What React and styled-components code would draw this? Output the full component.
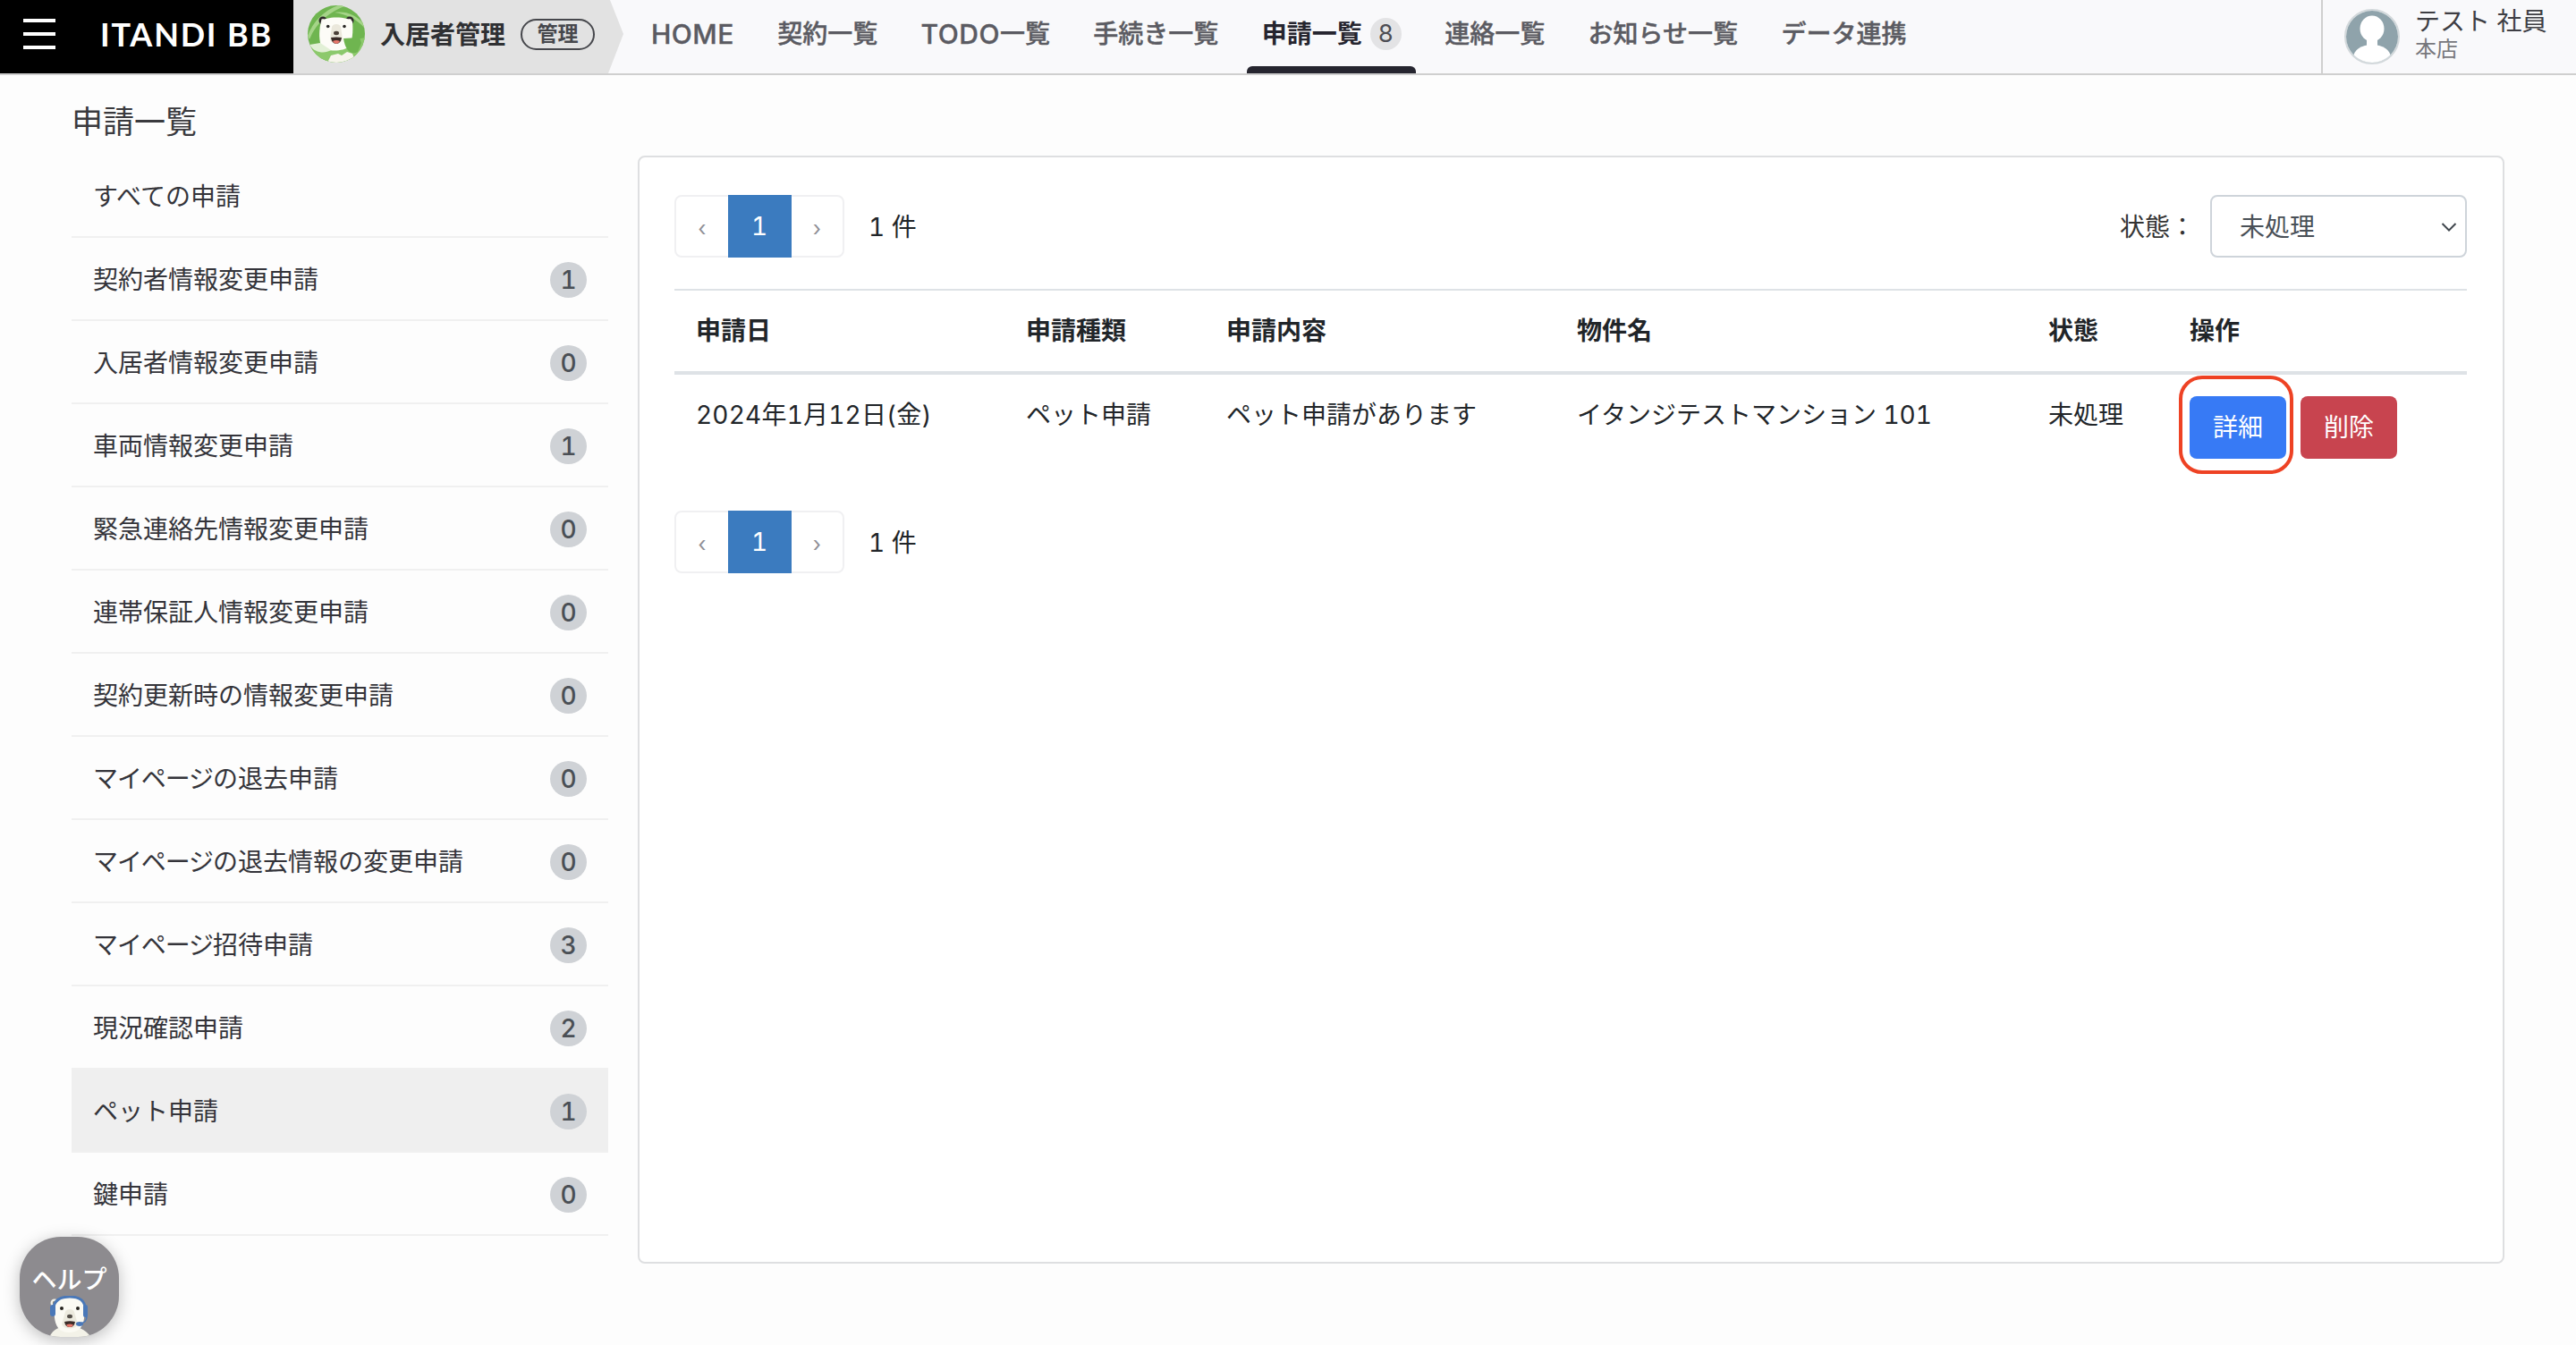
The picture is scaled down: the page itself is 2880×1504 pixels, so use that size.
import React from "react";
import styled, { createGlobalStyle } from "styled-components";

const GlobalStyle = createGlobalStyle`
  html, body {
    margin: 0;
    padding: 0;
    background: #fdfdfd;
  }
  body {
    font-family: Inter, "Noto Sans CJK JP", sans-serif;
    font-size: 28px;
    line-height: 42px;
    font-variant-numeric: tabular-nums;
    color: #212529;
  }
`;

const Page = styled.div`
  position: relative;
  width: 2880px;
  height: 1504px;
  overflow: hidden;
`;

const Header = styled.header`
  display: flex;
  height: 84px;
  box-sizing: border-box;
  background: #f9f9fb;
  border-bottom: 2px solid #cfcfcf;
`;

const Brand = styled.div`
  display: flex;
  align-items: center;
  width: 328px;
  flex: none;
  box-sizing: border-box;
  padding-bottom: 6px;
  background: #000;
`;

const Burger = styled.div`
  display: flex;
  flex-direction: column;
  gap: 11px;
  width: 36px;
  margin-left: 26px;
  span {
    display: block;
    height: 4px;
    background: #fff;
  }
`;

const BrandName = styled.div`
  margin-left: 50px;
  font-family: Lato, sans-serif;
  font-size: 36px;
  font-weight: 700;
  letter-spacing: 1.8px;
  color: #fff;
  white-space: nowrap;
`;

const ProductTab = styled.div`
  position: relative;
  display: flex;
  align-items: center;
  width: 370px;
  flex: none;
  box-sizing: border-box;
  padding: 0 0 6px 16px;
  background: #e2e2e2;
  clip-path: polygon(0 0, 354px 0, 369px 38px, 352px 82px, 0 82px);
`;

const ProductName = styled.div`
  margin: 2px 0 0 17px;
  font-size: 28px;
  font-weight: 700;
  color: #2f3033;
`;

const Pill = styled.div`
  margin-left: 17px;
  width: 83px;
  height: 35px;
  box-sizing: border-box;
  border: 2px solid #46474c;
  border-radius: 18px;
  font-size: 23px;
  font-weight: 700;
  line-height: 31px;
  text-align: center;
  color: #46474c;
`;

const Nav = styled.nav`
  display: flex;
  flex: 1;
  height: 82px;
  margin-left: 30px;
  gap: 48.4px;
`;

const NavItem = styled.div`
  position: relative;
  display: flex;
  align-items: center;
  height: 76px;
  font-size: 28px;
  font-weight: ${(p) => (p.$active ? 700 : 500)};
  color: ${(p) => (p.$active ? "#26252f" : "#5b5b62")};
  -webkit-text-stroke: ${(p) => (p.$active ? "0" : "0.4px")};
  white-space: nowrap;
  ${(p) =>
    p.$active &&
    `&::after {
      content: "";
      position: absolute;
      left: -17px;
      right: -16px;
      bottom: -6px;
      height: 8px;
      border-radius: 6px 6px 0 0;
      background: #26252f;
    }`}
`;

const NavLatin = styled.span`
  font-size: 30px;
  letter-spacing: 0.5px;
`;

const NavBadge = styled.span`
  width: 35px;
  height: 36px;
  margin-left: 9px;
  border-radius: 50%;
  background: #e3e3e5;
  font-size: 27px;
  font-weight: 400;
  line-height: 36px;
  text-align: center;
  color: #4d4d54;
`;

const UserBox = styled.div`
  display: flex;
  align-items: center;
  width: 285px;
  flex: none;
  box-sizing: border-box;
  padding-left: 24px;
  border-left: 2px solid #cfcfcf;
`;

const UserText = styled.div`
  margin-left: 17px;
`;

const UserName = styled.div`
  margin-top: -8px;
  font-size: 28px;
  line-height: 36px;
  color: #3e3e44;
  white-space: nowrap;
`;

const UserOffice = styled.div`
  font-size: 24px;
  line-height: 26px;
  color: #77777c;
`;

const Main = styled.main`
  display: flex;
  align-items: flex-start;
`;

const Side = styled.aside`
  width: 600px;
  margin-left: 80px;
  flex: none;
`;

const PageTitle = styled.h1`
  height: 89px;
  margin: 0;
  padding-top: 31px;
  box-sizing: border-box;
  font-size: 35px;
  font-weight: 400;
  line-height: 42px;
  color: #3a3a3e;
`;

const SideRow = styled.div`
  display: flex;
  align-items: center;
  justify-content: space-between;
  height: 93px;
  box-sizing: border-box;
  padding: 2px 24px 0;
  border-bottom: 2px solid #f0f0f0;
  background: ${(p) => (p.$active ? "#efefef" : "transparent")};
  color: #34343a;
`;

const TightKana = styled.span`
  letter-spacing: -1.1px;
`;

const CountBadge = styled.span`
  width: 41px;
  height: 40px;
  border-radius: 50%;
  background: #cfd2d6;
  font-size: 28px;
  font-weight: 500;
  line-height: 40px;
  text-align: center;
  color: #4a4f55;
`;

const Card = styled.section`
  width: 2087px;
  height: 1239px;
  margin: 90px 0 0 33px;
  box-sizing: border-box;
  padding: 42px 40px 0 39px;
  background: #fff;
  border: 2px solid #dedfe1;
  border-radius: 8px;
`;

const Toolbar = styled.div`
  display: flex;
  align-items: center;
  justify-content: space-between;
  margin-bottom: 35px;
`;

const PagerRow = styled.div`
  display: flex;
  align-items: center;
  gap: 27px;
`;

const Pager = styled.div`
  display: flex;
  height: 70px;
  width: 190px;
  box-sizing: border-box;
  border: 2px solid #f0f0f2;
  border-radius: 8px;
`;

const PagerArrow = styled.div`
  flex: 1;
  font-size: 24px;
  line-height: 72px;
  text-align: center;
  color: #8f8f96;
`;

const PagerCurrent = styled.div`
  width: 71px;
  height: 70px;
  margin-top: -2px;
  background: #3b7bbf;
  font-size: 28px;
  line-height: 70px;
  text-align: center;
  color: #fff;
`;

const PagerCount = styled.div`
  padding-top: 1px;
`;

const StatusFilter = styled.div`
  display: flex;
  align-items: center;
`;

const FilterLabel = styled.div`
  width: 101px;
  padding-top: 2px;
  color: #333;
`;

const FakeSelect = styled.div`
  display: flex;
  align-items: center;
  justify-content: space-between;
  width: 287px;
  height: 70px;
  box-sizing: border-box;
  padding: 2px 9px 0 31px;
  background: #fff;
  border: 2px solid #ced4da;
  border-radius: 8px;
  color: #495057;
`;

const Table = styled.table`
  width: 2004px;
  table-layout: fixed;
  border-collapse: collapse;
  th, td {
    padding: 24px;
    text-align: left;
    vertical-align: top;
  }
  th {
    font-weight: 700;
    border-top: 2px solid #dee2e6;
    border-bottom: 4px solid #dee2e6;
    color: #212529;
  }
  td {
    padding-bottom: 58px;
  }
`;

const DateText = styled.span`
  letter-spacing: 0.2px;
`;

const ButtonCell = styled.div`
  display: flex;
  gap: 16px;
`;

const ActionButton = styled.div`
  position: relative;
  width: 108px;
  height: 70px;
  border-radius: 8px;
  background: ${(p) => p.$bg};
  line-height: 70px;
  text-align: center;
  color: #fff;
`;

const Highlight = styled.div`
  position: absolute;
  top: -23px;
  left: -12px;
  right: -8px;
  bottom: -17px;
  border: 4px solid #ee4224;
  border-radius: 26px;
`;

const HelpButton = styled.div`
  position: absolute;
  left: 22px;
  top: 1383px;
  width: 111px;
  height: 112px;
  overflow: hidden;
  border-radius: 46px;
  background: #8d8b8f;
  box-shadow: 0 4px 18px rgba(0, 0, 0, 0.25);
  text-align: center;
`;

const HelpLabel = styled.div`
  margin-top: 30px;
  font-size: 28px;
  font-weight: 500;
  line-height: 36px;
  color: #fff;
`;

const HelpBear = styled.svg`
  position: absolute;
  left: 28px;
  bottom: 0;
`;

const SIDE_ITEMS = [
  { label: "すべての申請" },
  { label: "契約者情報変更申請", count: 1 },
  { label: "入居者情報変更申請", count: 0 },
  { label: "車両情報変更申請", count: 1 },
  { label: "緊急連絡先情報変更申請", count: 0 },
  { label: "連帯保証人情報変更申請", count: 0 },
  { label: "契約更新時の情報変更申請", count: 0 },
  { tight: "マイページ", label: "の退去申請", count: 0 },
  { tight: "マイページ", label: "の退去情報の変更申請", count: 0 },
  { tight: "マイページ", label: "招待申請", count: 3 },
  { label: "現況確認申請", count: 2 },
  { label: "ペット申請", count: 1, active: true },
  { label: "鍵申請", count: 0 },
];

const BearLogo = () => (
  <svg width="64" height="64" viewBox="0 0 64 64" style={{ flex: "none" }}>
    <defs>
      <clipPath id="logoClip">
        <circle cx="32" cy="32" r="32" />
      </clipPath>
    </defs>
    <g clipPath="url(#logoClip)">
      <rect width="64" height="64" fill="#6fb550" />
      <path d="M0 34 C6 18 18 6 34 0 L44 0 C26 6 10 18 2 38Z" fill="#a5d488" />
      <path d="M30 8 C42 6 54 10 64 22 L64 26 C54 14 42 10 30 8Z" fill="#a5d488" />
      <path d="M2 50 C12 38 30 44 46 40 L64 36 L64 64 L0 64Z" fill="#8cc96c" />
      <circle cx="17" cy="17" r="4.5" fill="#2c2a28" />
      <circle cx="47" cy="17" r="4.5" fill="#2c2a28" />
      <circle cx="17" cy="17" r="2" fill="#e8e3d8" />
      <circle cx="47" cy="17" r="2" fill="#e8e3d8" />
      <path d="M15 18 C19 12 45 12 50 18 C51 30 50 40 46 46 C40 52 20 52 15 46 C12 36 13 26 15 18Z" fill="#fdfcf7" />
      <path d="M27 24 C28 20 36 20 37 24 L39 38 C37 44 27 44 25 38Z" fill="#ebe8dc" />
      <circle cx="22.7" cy="23.5" r="1.8" fill="#2c2a28" />
      <circle cx="41" cy="23.5" r="1.8" fill="#2c2a28" />
      <ellipse cx="32" cy="31" rx="3" ry="2.2" fill="#4a4038" />
      <path d="M26 36 Q32 35 38 36 Q37 43 32 43 Q27 43 26 36Z" fill="#3a2c28" />
      <path d="M28 40 Q32 38 36 40 Q34.5 43 32 43 Q29.5 43 28 40Z" fill="#e8786c" />
      <path d="M40 37 L58 36 L60 42 L56 52 C48 56 42 50 40 37Z" fill="#6fb550" />
      <path d="M2 44 L14 42 L26 50 C20 54 8 54 2 44Z" fill="#e2f0d6" />
      <path d="M22 64 L26 56 L34 54 L38 56 L44 52 L50 54 L54 64Z" fill="#f7f5ec" />
    </g>
  </svg>
);

const UserIcon = () => (
  <svg width="62" height="62" viewBox="0 0 62 62" style={{ flex: "none" }}>
    <defs>
      <clipPath id="userClip">
        <circle cx="31" cy="31" r="29" />
      </clipPath>
    </defs>
    <circle cx="31" cy="31" r="30" fill="#fff" stroke="#d2d8db" strokeWidth="2" />
    <g clipPath="url(#userClip)">
      <rect width="62" height="62" fill="#8fa3ab" />
      <ellipse cx="31" cy="22" rx="13.5" ry="14.5" fill="#fff" />
      <rect x="25" y="30" width="12" height="14" fill="#fff" />
      <ellipse cx="31" cy="54" rx="21" ry="14" fill="#fff" />
    </g>
  </svg>
);

const Chevron = () => (
  <svg width="18" height="14" viewBox="0 0 18 14">
    <path d="M1.5 3 L9 10.5 L16.5 3" fill="none" stroke="#3f464d" strokeWidth="2" />
  </svg>
);

const PagerBlock = () => (
  <PagerRow>
    <Pager>
      <PagerArrow>‹</PagerArrow>
      <PagerCurrent>1</PagerCurrent>
      <PagerArrow>›</PagerArrow>
    </Pager>
    <PagerCount>1 件</PagerCount>
  </PagerRow>
);

const App = () => {
  return (
    <Page>
      <GlobalStyle />
      <Header>
        <Brand>
          <Burger>
            <span />
            <span />
            <span />
          </Burger>
          <BrandName>ITANDI BB</BrandName>
        </Brand>
        <ProductTab>
          <BearLogo />
          <ProductName>入居者管理</ProductName>
          <Pill>管理</Pill>
        </ProductTab>
        <Nav>
          <NavItem><NavLatin>HOME</NavLatin></NavItem>
          <NavItem>契約一覧</NavItem>
          <NavItem><NavLatin>TODO</NavLatin>一覧</NavItem>
          <NavItem>手続き一覧</NavItem>
          <NavItem $active>
            申請一覧
            <NavBadge>8</NavBadge>
          </NavItem>
          <NavItem>連絡一覧</NavItem>
          <NavItem>お知らせ一覧</NavItem>
          <NavItem>データ連携</NavItem>
        </Nav>
        <UserBox>
          <UserIcon />
          <UserText>
            <UserName>テスト 社員</UserName>
            <UserOffice>本店</UserOffice>
          </UserText>
        </UserBox>
      </Header>

      <Main>
        <Side>
          <PageTitle>申請一覧</PageTitle>
          {SIDE_ITEMS.map((item) => (
            <SideRow key={(item.tight || "") + item.label} $active={item.active}>
              <span>
                {item.tight && <TightKana>{item.tight}</TightKana>}
                {item.label}
              </span>
              {item.count !== undefined && <CountBadge>{item.count}</CountBadge>}
            </SideRow>
          ))}
        </Side>

        <Card>
          <Toolbar>
            <PagerBlock />
            <StatusFilter>
              <FilterLabel>状態：</FilterLabel>
              <FakeSelect>
                未処理
                <Chevron />
              </FakeSelect>
            </StatusFilter>
          </Toolbar>

          <Table>
            <colgroup>
              <col style={{ width: 369 }} />
              <col style={{ width: 224 }} />
              <col style={{ width: 392 }} />
              <col style={{ width: 527 }} />
              <col style={{ width: 158 }} />
              <col />
            </colgroup>
            <thead>
              <tr>
                <th>申請日</th>
                <th>申請種類</th>
                <th>申請内容</th>
                <th>物件名</th>
                <th>状態</th>
                <th>操作</th>
              </tr>
            </thead>
            <tbody>
              <tr>
                <td><DateText>2024年1月12日(金)</DateText></td>
                <td>ペット申請</td>
                <td>ペット申請があります</td>
                <td>イタンジテストマンション 101</td>
                <td>未処理</td>
                <td>
                  <ButtonCell>
                    <ActionButton $bg="#377af5">
                      詳細
                      <Highlight />
                    </ActionButton>
                    <ActionButton $bg="#c8444f">削除</ActionButton>
                  </ButtonCell>
                </td>
              </tr>
            </tbody>
          </Table>

          <PagerBlock />
        </Card>
      </Main>

      <HelpButton>
        <HelpLabel>ヘルプ</HelpLabel>
        <HelpBear width="56" height="46" viewBox="0 0 56 46">
          <path d="M5 46 C10 37 16 34 27 34 C38 34 44 37 52 46Z" fill="#f3f2e8" />
          <circle cx="11" cy="8" r="4.5" fill="#f3f2e8" />
          <circle cx="11" cy="8" r="2.2" fill="#8a8578" />
          <path d="M11 12 C11 5 18 2 28 2 C38 2 44 5 44 13 C45 24 44 33 38 38 C32 42 22 42 17 38 C11 33 10 22 11 12Z" fill="#fbfaf3" />
          <path d="M23 18 C24 14 32 14 33 18 L37 32 C34 38 22 38 19 32Z" fill="#eceade" />
          <circle cx="19" cy="14" r="2" fill="#26231f" />
          <circle cx="37" cy="14" r="2" fill="#26231f" />
          <ellipse cx="28" cy="23" rx="3" ry="2.2" fill="#55504a" />
          <path d="M22 29 Q28 27.5 34 29 Q33 35 28 35 Q23 35 22 29Z" fill="#3a2c28" />
          <path d="M24 32.5 Q28 30.5 32 32.5 Q31 35 28 35 Q25 35 24 32.5Z" fill="#e8786c" />
          <path d="M10 14 C10 5 18 1 28 1 C38 1 46 5 45 16" fill="none" stroke="#4a78b8" strokeWidth="3" />
          <rect x="6" y="10" width="6" height="13" rx="3" fill="#4a78b8" />
          <rect x="43" y="10" width="5" height="14" rx="2.5" fill="#4a78b8" />
          <path d="M47 23 C47 28 45 30 40 31" fill="none" stroke="#4a78b8" strokeWidth="1.5" />
          <ellipse cx="39" cy="31.5" rx="4" ry="2.4" fill="#4a78b8" />
        </HelpBear>
      </HelpButton>
    </Page>
  );
};

export default App;
